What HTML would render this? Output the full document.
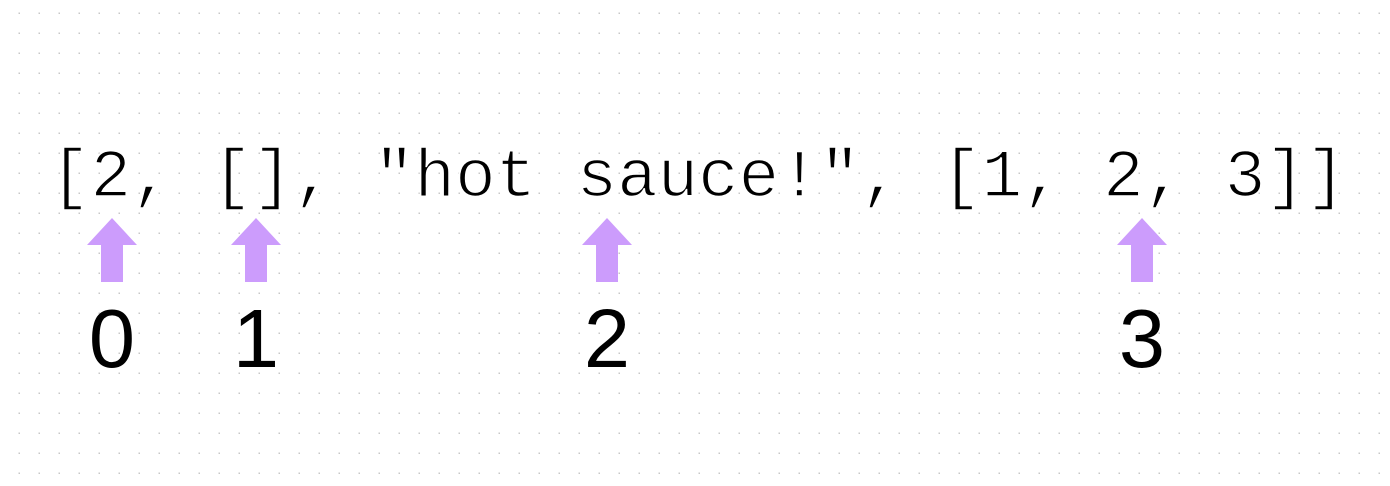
<!DOCTYPE html>
<html><head><meta charset="utf-8"><style>
html,body{margin:0;padding:0;background:#fff;}
svg{display:block}
</style></head><body>
<svg width="1390" height="486" xmlns="http://www.w3.org/2000/svg">
<defs>
<pattern id="d" x="18" y="12" width="20" height="20" patternUnits="userSpaceOnUse">
<rect x="0.5" y="0.5" width="1.5" height="1.5" fill="#c8c8c8"/>
</pattern>
</defs>
<rect width="1390" height="486" fill="#fff"/>
<rect width="1390" height="486" fill="url(#d)"/>
<text x="50" y="196" font-family="Liberation Mono, monospace" font-size="67.5" fill="#000" stroke="#fff" stroke-width="1.6" xml:space="preserve">[2, [], "hot sauce!", [1, 2, 3]]</text>
<g fill="#cc9cfc">
<path d="M112 218 L137 245 L123 245 L123 282 L101 282 L101 245 L87 245 Z"/>
<path d="M256 218 L281 245 L267 245 L267 282 L245 282 L245 245 L231 245 Z"/>
<path d="M607 218 L632 245 L618 245 L618 282 L596 282 L596 245 L582 245 Z"/>
<path d="M1142 218 L1167 245 L1153 245 L1153 282 L1131 282 L1131 245 L1117 245 Z"/>
</g>
<g font-family="Liberation Sans, Arial, sans-serif" font-size="83" fill="#000" text-anchor="middle">
<text x="112" y="367">0</text>
<text x="256" y="367">1</text>
<text x="607" y="367">2</text>
<text x="1142" y="367">3</text>
</g>
</svg>
</body></html>
